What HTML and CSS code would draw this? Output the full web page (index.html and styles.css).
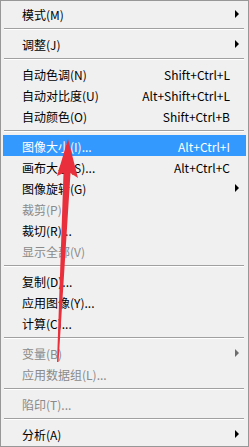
FILE: index.html
```html
<!DOCTYPE html>
<html lang="zh-CN">
<head>
<meta charset="utf-8">
<title>图像菜单</title>
<link rel="stylesheet" href="styles.css">
</head>
<body>
<div class="menu">
  <div class="item"><span class="label">模式(M)</span><span></span><span class="arrow"></span></div>
  <div class="sep"></div>
  <div class="item"><span class="label">调整(J)</span><span></span><span class="arrow"></span></div>
  <div class="sep"></div>
  <div class="item"><span class="label">自动色调(N)</span><span class="key">Shift+Ctrl+L</span><span></span></div>
  <div class="item"><span class="label">自动对比度(U)</span><span class="key">Alt+Shift+Ctrl+L</span><span></span></div>
  <div class="item"><span class="label">自动颜色(O)</span><span class="key">Shift+Ctrl+B</span><span></span></div>
  <div class="sep"></div>
  <div class="item active"><span class="label">图像大小(I)...</span><span class="key">Alt+Ctrl+I</span><span></span></div>
  <div class="item"><span class="label">画布大小(S)...</span><span class="key">Alt+Ctrl+C</span><span></span></div>
  <div class="item"><span class="label">图像旋转(G)</span><span></span><span class="arrow"></span></div>
  <div class="item disabled"><span class="label">裁剪(P)</span><span></span><span></span></div>
  <div class="item"><span class="label">裁切(R)...</span><span></span><span></span></div>
  <div class="item disabled"><span class="label">显示全部(V)</span><span></span><span></span></div>
  <div class="sep"></div>
  <div class="item"><span class="label">复制(D)...</span><span></span><span></span></div>
  <div class="item"><span class="label">应用图像(Y)...</span><span></span><span></span></div>
  <div class="item"><span class="label">计算(C)...</span><span></span><span></span></div>
  <div class="sep"></div>
  <div class="item disabled"><span class="label">变量(B)</span><span></span><span class="arrow"></span></div>
  <div class="item disabled"><span class="label">应用数据组(L)...</span><span></span><span></span></div>
  <div class="sep"></div>
  <div class="item disabled"><span class="label">陷印(T)...</span><span></span><span></span></div>
  <div class="sep"></div>
  <div class="item"><span class="label">分析(A)</span><span></span><span class="arrow"></span></div>
</div>
<svg class="annot" width="249" height="447" viewBox="0 0 249 447">
  <polygon points="68,139 78,178 70.5,173 58.5,362 57,362 63.5,173 57,176" fill="#ea2f3c"/>
</svg>
</body>
</html>
```
FILE: styles.css
```css
html, body {
  margin: 0;
  padding: 0;
  background: #f0f0f0;
}

.menu {
  width: 249px;
  height: 447px;
  box-sizing: border-box;
  border: 1px solid #979797;
  background: #f0f0f0;
  padding: 2px 2px 2px 2px;
  font-family: "Noto Sans CJK SC", "Noto Sans", sans-serif;
  font-size: 12px;
  color: #000;
}

.item {
  height: 21px;
  display: grid;
  grid-template-columns: 1fr auto 16px;
  align-items: center;
  padding-left: 19px;
  white-space: nowrap;
  line-height: 21px;
}

.item .label,
.item .key {
  position: relative;
  top: 1px;
}

.item.active {
  background: #3399ff;
  color: #fff;
}

.item.disabled {
  color: #8a8a8a;
}

.key {
  text-align: right;
}

.arrow {
  justify-self: start;
  margin-left: 5px;
  width: 0;
  height: 0;
  border-left: 4px solid #000;
  border-top: 4px solid transparent;
  border-bottom: 4px solid transparent;
}

.disabled .arrow {
  border-left-color: #6d6d6d;
}

.sep {
  height: 0;
  margin: 4px 2px 3px 1px;
  border-top: 1px solid #a0a0a0;
  border-bottom: 1px solid #ffffff;
}

.annot {
  position: absolute;
  left: 0;
  top: 0;
  pointer-events: none;
}
```
